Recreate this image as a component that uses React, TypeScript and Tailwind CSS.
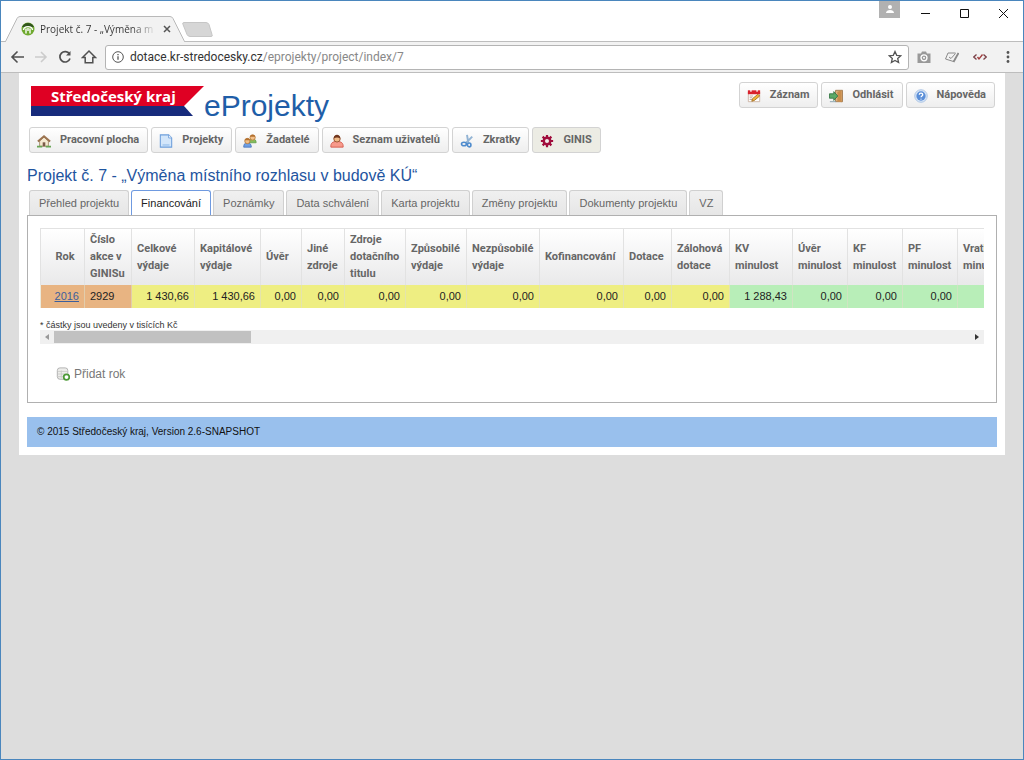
import React, { useState } from 'react';

interface Column {
  label: string;
  value: string;
  width: number;
  tone: 'orange' | 'yellow' | 'green';
}

const columns: Column[] = [
  { label: 'Rok', value: '2016', width: 44, tone: 'orange' },
  { label: 'Číslo akce v GINISu', value: '2929', width: 47, tone: 'orange' },
  { label: 'Celkové výdaje', value: '1 430,66', width: 63, tone: 'yellow' },
  { label: 'Kapitálové výdaje', value: '1 430,66', width: 66, tone: 'yellow' },
  { label: 'Úvěr', value: '0,00', width: 41, tone: 'yellow' },
  { label: 'Jiné zdroje', value: '0,00', width: 43, tone: 'yellow' },
  { label: 'Zdroje dotačního titulu', value: '0,00', width: 61, tone: 'yellow' },
  { label: 'Způsobilé výdaje', value: '0,00', width: 61, tone: 'yellow' },
  { label: 'Nezpůsobilé výdaje', value: '0,00', width: 73, tone: 'yellow' },
  { label: 'Kofinancování', value: '0,00', width: 84, tone: 'yellow' },
  { label: 'Dotace', value: '0,00', width: 48, tone: 'yellow' },
  { label: 'Zálohová dotace', value: '0,00', width: 58, tone: 'yellow' },
  { label: 'KV minulost', value: '1 288,43', width: 63, tone: 'green' },
  { label: 'Úvěr minulost', value: '0,00', width: 55, tone: 'green' },
  { label: 'KF minulost', value: '0,00', width: 55, tone: 'green' },
  { label: 'PF minulost', value: '0,00', width: 55, tone: 'green' },
  { label: 'Vratka minulost', value: '', width: 55, tone: 'green' },
];

const tableWidth = columns.reduce((sum, column) => sum + column.width, 0);

const tones = {
  orange: 'bg-[#e8b482]',
  yellow: 'bg-[#eeee82]',
  green: 'bg-[#b8eeb8]',
};

const tabs = [
  'Přehled projektu',
  'Financování',
  'Poznámky',
  'Data schválení',
  'Karta projektu',
  'Změny projektu',
  'Dokumenty projektu',
  'VZ',
];

const HomeIcon = () => (
  <svg viewBox="0 0 16 16" className="size-3.5">
    <path d="M3 8v6h10V8L8 3.500z" fill="#f6ead2" stroke="#a08866" />
    <path d="M1 8.500 8 2.500l7 6" fill="none" stroke="#9b7350" strokeWidth="2.200" />
    <path d="M6.500 14V9.500h3V14z" fill="#7b5a48" />
    <path d="M0 14.500h6M10 14.500h6" stroke="#68a556" strokeWidth="2" />
  </svg>
);

const PageIcon = () => (
  <svg viewBox="0 0 16 16" className="size-3.5">
    <path d="M1.500 1h9.500l3.500 3.500V15h-13z" fill="#d3e6fa" stroke="#6c9edb" strokeWidth="1.200" />
    <path d="M11 1v3.500h3.500" fill="#fff" stroke="#6c9edb" />
    <path d="M4 12.500h8" stroke="#a9cbf0" strokeWidth="2" />
  </svg>
);

const GroupIcon = () => (
  <svg viewBox="0 0 16 16" className="size-3.5">
    <path d="M7 10c0-3 1.500-4.500 4-4.500s4 1.500 4 4.500z" fill="#82bd5c" stroke="#6aa04e" />
    <circle cx="11" cy="4" r="3" fill="#f2c089" stroke="#b97d3c" />
    <path d="M8 3.200c.5-3 5.500-3 6 0z" fill="#b3702f" />
    <path d="M.8 15c0-3.500 1.500-5 4.200-5s4.500 1.500 4.500 5z" fill="#6f9fe3" stroke="#4a78c0" />
    <circle cx="5" cy="8" r="3" fill="#f2c089" stroke="#b97d3c" />
    <path d="M2 7.200c.5-3 5.500-3 6 0z" fill="#b3702f" />
  </svg>
);

const UserIcon = () => (
  <svg viewBox="0 0 16 16" className="size-3.5">
    <path d="M1 15c-.5-4.500 2-6.500 7-6.500s7.500 2 7 6.500z" fill="#f79a8b" stroke="#d4584c" />
    <circle cx="8" cy="5.500" r="3.700" fill="#f1bb87" stroke="#8e4d2b" />
    <path d="M4.300 5C4.300-.5 11.700-.5 11.700 5 9 3.500 7 3.500 4.300 5z" fill="#70371f" />
  </svg>
);

const ScissorsIcon = () => (
  <svg viewBox="0 0 16 16" className="size-3.5" fill="none">
    <path d="M8 1l1.500 9M14 3 7 10" stroke="#93b4d4" strokeWidth="2.200" />
    <ellipse cx="4.500" cy="11.500" rx="2.800" ry="2" stroke="#4e8bcd" strokeWidth="1.800" />
    <ellipse cx="10.500" cy="12.500" rx="2" ry="2.200" stroke="#4e8bcd" strokeWidth="1.800" />
  </svg>
);

const GearIcon = () => (
  <svg viewBox="0 0 16 16" className="size-3.5" fill="none">
    <path d="M8 1v14M1 8h14M3 3l10 10M13 3 3 13" stroke="#a00d3c" strokeWidth="2.500" />
    <circle cx="8" cy="8" r="3.700" fill="#f1eeea" stroke="#a00d3c" strokeWidth="2.800" />
  </svg>
);

const CalendarIcon = () => (
  <svg viewBox="0 0 16 16" className="size-3.5">
    <path d="M1.500 3.500h13v11h-13z" fill="#fff" stroke="#c9b0a0" />
    <path d="M1 1.500h14V6H1z" fill="#d9212c" />
    <path d="M4.500 0v3M11.500 0v3" stroke="#fff" strokeWidth="1.500" />
    <path d="M3 8h4M3 10h3M3 12h4" stroke="#bb9d8e" />
    <path d="m5.500 14 .8-3L12.500 6l2 2-6 5z" fill="#f3b63b" stroke="#a37025" />
  </svg>
);

const LogoutIcon = () => (
  <svg viewBox="0 0 16 16" className="size-3.5">
    <path d="M7.500 1.500h8v13h-8z" fill="#dcb583" stroke="#9d7448" />
    <path d="m9.500 3 5-1.500v13.500l-5-1z" fill="#c98d4c" />
    <path d="M.5 5.500h5V3L10 8l-4.500 5v-2.500h-5z" fill="#5ca967" stroke="#347542" />
    <path d="M1 14.500h7" stroke="#819ba8" />
  </svg>
);

const HelpIcon = () => (
  <svg viewBox="0 0 16 16" className="size-3.5">
    <circle cx="8" cy="8" r="7.200" fill="#d6e4f6" stroke="#a9c2e4" />
    <circle cx="8" cy="8" r="5.300" fill="#5b8fd8" />
    <path d="M6 6.500C6 4 10 4 10 6.500 10 8 8 8 8 9.500M8 11v1" fill="none" stroke="#fff" strokeWidth="1.500" />
  </svg>
);

const AddRowIcon = () => (
  <svg viewBox="0 0 16 16" className="size-3.5">
    <rect x="1.500" y="1" width="12" height="13" rx="3" fill="#ededeb" stroke="#aaa" />
    <path d="M2 5h11M2 8h9M2 11h6M6 4v9" stroke="#c9c9c6" />
    <circle cx="12" cy="11.500" r="3.200" fill="#fff" stroke="#4d9a37" strokeWidth="2" />
  </svg>
);

const toolbar = [
  { label: 'Pracovní plocha', icon: <HomeIcon /> },
  { label: 'Projekty', icon: <PageIcon /> },
  { label: 'Žadatelé', icon: <GroupIcon /> },
  { label: 'Seznam uživatelů', icon: <UserIcon /> },
  { label: 'Zkratky', icon: <ScissorsIcon /> },
  { label: 'GINIS', icon: <GearIcon />, active: true },
];

const userMenu = [
  { label: 'Záznam', icon: <CalendarIcon /> },
  { label: 'Odhlásit', icon: <LogoutIcon /> },
  { label: 'Nápověda', icon: <HelpIcon /> },
];

interface ToolButtonProps {
  label: string;
  icon: React.ReactNode;
  active?: boolean;
}

const ToolButton = ({ label, icon, active = false }: ToolButtonProps) => (
  <button
    className={`flex h-[26px] items-center gap-[9px] whitespace-nowrap rounded-[3px] border border-[#d3d3d3] pt-px pl-[7px] pr-2 font-['Roboto',sans-serif] text-[11px] font-bold text-[#666] ${
      active ? 'bg-[#ecece4]' : 'bg-linear-to-b from-white to-[#eeeeee]'
    }`}
  >
    {icon}
    {label}
  </button>
);

const TitleBar = () => (
  <div className="flex h-10 items-start bg-white">
    <div className="relative mt-[15px] h-[26px] w-[180px] shrink-0">
      <svg viewBox="0 0 180 26" className="absolute inset-0 h-full w-full overflow-visible">
        <path d="M4.500 26 16 2.500Q17 .5 19 .5h150q2 0 3 2L183.500 26z" fill="#f2f2f2" />
        <path d="M0 25.500h4.500L16 2.500Q17 .5 19 .5h150q2 0 3 2l11.500 23" fill="none" stroke="#b9b9b9" />
      </svg>
      <div className="relative flex h-full items-center gap-[5px] pl-5 pr-1.5">
        <svg viewBox="0 0 14 14" className="size-3.5 shrink-0">
          <circle cx="7" cy="7" r="6.500" fill="#6fa92f" />
          <path d="M1 5C3-.5 11-.5 13 5z" fill="#31561c" />
          <path d="M2.500 8C3 3.500 11 3.500 11.500 8M5 11.500V6.500M7 9V6M9 11.500V6.500" fill="none" stroke="#fff" strokeWidth="1.400" />
        </svg>
        <span className="flex-1 whitespace-nowrap bg-linear-to-r from-[#333] from-80% to-[#ddd] bg-clip-text font-['Open_Sans','Noto_Sans',sans-serif] text-[10px] text-transparent">
          Projekt č. 7 - „Výměna m
        </span>
        <button aria-label="Zavřít kartu" className="mx-1">
          <svg viewBox="0 0 8 8" className="size-2" stroke="#555" strokeWidth="1.500">
            <path d="m1 1 6 6M7 1 1 7" />
          </svg>
        </button>
      </div>
    </div>
    <button aria-label="Nová karta" className="mt-[21px]">
      <svg viewBox="0 0 32 16" className="h-4 w-8">
        <path d="M3 .5h22q2 0 3 2l3 10q1 2-1 2H9q-2 0-3-2l-4-10q-1-2 1-2z" fill="#d6d6d6" stroke="#c6c6c6" />
      </svg>
    </button>
    <div className="ml-auto flex items-start">
      <button aria-label="Profil" className="mr-5 flex h-[17px] w-[21px] justify-center bg-[#b1b1b1] pt-1">
        <svg viewBox="0 0 8 8" className="size-2" fill="#fff">
          <circle cx="4" cy="2" r="2" />
          <path d="M0 8c0-4 8-4 8 0z" />
        </svg>
      </button>
      <div className="mr-3.5 mt-[7px] flex gap-7">
        <button aria-label="Minimalizovat">
          <svg viewBox="0 0 11 11" className="size-[11px]" stroke="#111"><path d="M1 5.500h9" /></svg>
        </button>
        <button aria-label="Maximalizovat">
          <svg viewBox="0 0 11 11" className="size-[11px]" stroke="#111" fill="none"><path d="M1.500 1.500h8v8h-8z" /></svg>
        </button>
        <button aria-label="Zavřít">
          <svg viewBox="0 0 11 11" className="size-[11px]" stroke="#111"><path d="m1 1 9 9M10 1l-9 9" /></svg>
        </button>
      </div>
    </div>
  </div>
);

const AddressBar = () => (
  <div className="flex h-8 items-center gap-2 border-y border-[#bdbdbd] bg-[#f2f2f2] px-2">
    <button aria-label="Zpět">
      <svg viewBox="0 0 16 16" className="size-4" fill="none" stroke="#505050" strokeWidth="1.600"><path d="M15 8H3M8.500 2.500 3 8l5.500 5.500" /></svg>
    </button>
    <button aria-label="Vpřed">
      <svg viewBox="0 0 16 16" className="size-4" fill="none" stroke="#ccc" strokeWidth="1.600"><path d="M2 8h11M8 3l5 5-5 5" /></svg>
    </button>
    <button aria-label="Obnovit">
      <svg viewBox="0 0 16 16" className="size-4" fill="none" stroke="#505050" strokeWidth="1.700"><path d="M12.500 5A5.200 5.200 0 1 0 13 9.500" /><path d="M13.500 2v4.500H9z" fill="#505050" stroke="none" /></svg>
    </button>
    <button aria-label="Domů">
      <svg viewBox="0 0 16 16" className="size-4" fill="none" stroke="#505050" strokeWidth="1.500"><path d="M1.500 8.500 8 2l6.500 6.500h-2.700v5.200H4.200V8.500z" /></svg>
    </button>
    <div className="flex h-[25px] flex-1 items-center rounded-[3px] border border-[#b4b4b4] bg-white px-1.5">
      <svg viewBox="0 0 12 12" className="size-3" fill="none" stroke="#555"><circle cx="6" cy="6" r="5.300" /><path d="M6 5.200v3.600M6 3v1.200" strokeWidth="1.300" /></svg>
      <div className="ml-1.5 flex-1 font-['Roboto',sans-serif] text-[12px] text-[#333]">
        dotace.kr-stredocesky.cz<span className="text-[#888]">/eprojekty/project/index/7</span>
      </div>
      <button aria-label="Přidat záložku">
        <svg viewBox="0 0 14 14" className="size-3.5" fill="none" stroke="#555" strokeWidth="1.300"><path d="m7 1.500 1.700 3.800 4 .4-3 2.700.9 4.100L7 10.400l-3.600 2.100.9-4.100-3-2.700 4-.4z" /></svg>
      </button>
    </div>
    <div className="flex items-center gap-3.5">
      <button aria-label="Snímek">
        <svg viewBox="0 0 14 14" className="size-3.5"><path d="M1 3.500h3L5 1.500h4l1 2h3.500v9.500h-13V3.500z" fill="#999" /><circle cx="7" cy="7.800" r="3" fill="#999" stroke="#fff" strokeWidth="1.300" /><circle cx="7" cy="7.800" r="1" fill="#fff" /></svg>
      </button>
      <button aria-label="Poznámky rozšíření">
        <svg viewBox="0 0 14 14" className="size-3.5" fill="none" stroke="#8a8a8a"><path d="M3 3h7.500M.5 9 3 3M.5 9l8 2.500L13.500 3" /><path d="m8.500 12 5-9" strokeWidth="1.800" /><path d="m4 7 2 1.500L10.500 3.500" /></svg>
      </button>
      <button aria-label="Validátor">
        <svg viewBox="0 0 14 14" className="size-3.5" fill="none" stroke="#7a4148" strokeWidth="1.300"><path d="M3.500 4.500.8 7l2.700 2.500M10.500 4.500 13.200 7l-2.700 2.500" /><path d="M4.500 7 6 9l3.500-4.500" stroke="#a23a3a" /></svg>
      </button>
      <button aria-label="Nabídka">
        <svg viewBox="0 0 14 14" className="size-3.5" fill="#555"><circle cx="7" cy="2.500" r="1.400" /><circle cx="7" cy="7" r="1.400" /><circle cx="7" cy="11.500" r="1.400" /></svg>
      </button>
    </div>
  </div>
);

const FinanceTable = () => (
  <div className="overflow-hidden">
    <table className="table-fixed border-collapse text-[11px]" style={{ width: tableWidth }}>
      <colgroup>
        {columns.map((column) => (
          <col key={column.label} style={{ width: column.width }} />
        ))}
      </colgroup>
      <thead>
        <tr className="h-14 bg-linear-to-b from-white to-[#e9e9ea]">
          {columns.map((column, index) => (
            <th
              key={column.label}
              className={`border-x border-t border-[#e2e2e2] pl-[5px] font-['Roboto',sans-serif] leading-[17px] font-bold text-[#666] ${
                index === 0 ? 'text-center' : 'text-left'
              }`}
            >
              {column.label}
            </th>
          ))}
        </tr>
      </thead>
      <tbody>
        <tr className="h-[23px] text-[#222]">
          {columns.map((column, index) => (
            <td
              key={column.label}
              className={`border-x border-[#dedec8]/60 px-[5px] whitespace-nowrap ${tones[column.tone]} ${
                index === 1 ? 'text-left' : 'text-right'
              }`}
            >
              {index === 0 ? (
                <a href="#rok-2016" className="text-[#3d5f9c] underline">{column.value}</a>
              ) : (
                column.value
              )}
            </td>
          ))}
        </tr>
      </tbody>
    </table>
  </div>
);

const ScrollStrip = () => (
  <div className="flex h-3.5 items-center bg-[#f0f0f0]">
    <button aria-label="Posunout vlevo" className="flex w-3.5 justify-center">
      <svg viewBox="0 0 6 6" className="size-1.5" fill="#999"><path d="M5 0v6L1 3z" /></svg>
    </button>
    <div className="flex flex-1 items-center self-stretch">
      <div className="h-3 w-[197px] bg-[#c1c1c1]" />
    </div>
    <button aria-label="Posunout vpravo" className="flex w-3.5 justify-center">
      <svg viewBox="0 0 6 6" className="size-1.5" fill="#333"><path d="M1 0v6l4-3z" /></svg>
    </button>
  </div>
);

export default function App() {
  const [activeTab, setActiveTab] = useState('Financování');

  return (
    <div className="flex min-h-screen flex-col border border-[#4a86bd] bg-[#dddddd] font-['Liberation_Sans',Arial,sans-serif]">
      <TitleBar />
      <AddressBar />

      <main className="mx-[18px] bg-white px-2 pb-2">
        <header className="flex items-start justify-between pl-1 pt-[9px] pr-0.5">
          <div className="flex">
            <div className="relative mt-1 h-[30px] w-[173px]">
              <svg viewBox="0 0 173 30" className="absolute inset-0 h-full w-full">
                <path d="M0 0h173l-20 20H0z" fill="#df0023" />
                <path d="M0 20h153l9 10H0z" fill="#172b7c" />
              </svg>
              <span className="relative block pl-5 font-['Open_Sans','Noto_Sans',sans-serif] text-[15px] leading-[21px] font-bold text-white">
                Středočeský kraj
              </span>
            </div>
            <h1 className="mt-1.5 text-[30px] leading-9 text-[#1f5ea8]">eProjekty</h1>
          </div>
          <div className="flex gap-[3px]">
            {userMenu.map((item) => (
              <ToolButton key={item.label} {...item} />
            ))}
          </div>
        </header>

        <nav className="mt-[3px] flex gap-[3px] pl-0.5">
          {toolbar.map((item) => (
            <ToolButton key={item.label} {...item} />
          ))}
        </nav>

        <h2 className="mt-[13px] text-[16px] leading-5 text-[#1f55a0]">
          Projekt č. 7 - „Výměna místního rozhlasu v budově KÚ“
        </h2>

        <div role="tablist" className="mt-1 flex gap-0.5 pl-0.5">
          {tabs.map((tab) => (
            <button
              key={tab}
              role="tab"
              aria-selected={tab === activeTab}
              onClick={() => setActiveTab(tab)}
              className={`h-[25px] rounded-t-[3px] border border-b-0 px-[9px] text-[11px] whitespace-nowrap ${
                tab === activeTab
                  ? 'border-[#6f9ae0] bg-white text-[#222]'
                  : 'border-[#d0d0d0] bg-linear-to-b from-[#f0f0f0] to-[#e6e6e6] text-[#666]'
              }`}
            >
              {tab}
            </button>
          ))}
        </div>

        <section className="border border-[#b0b0b0] px-3 pt-3 pb-5">
          <FinanceTable />
          <p className="mt-3 text-[9px] leading-[10px] text-[#333]">* částky jsou uvedeny v tisících Kč</p>
          <ScrollStrip />
          <button className="mt-[22px] ml-4 flex h-4 items-center gap-1 text-[12px] text-[#777]">
            <AddRowIcon />
            Přidat rok
          </button>
        </section>

        <footer className="mt-3.5 bg-[#99c0ed] px-2.5 text-[10px] leading-[30px] text-[#111]">
          © 2015 Středočeský kraj, Version 2.6-SNAPSHOT
        </footer>
      </main>
    </div>
  );
}
